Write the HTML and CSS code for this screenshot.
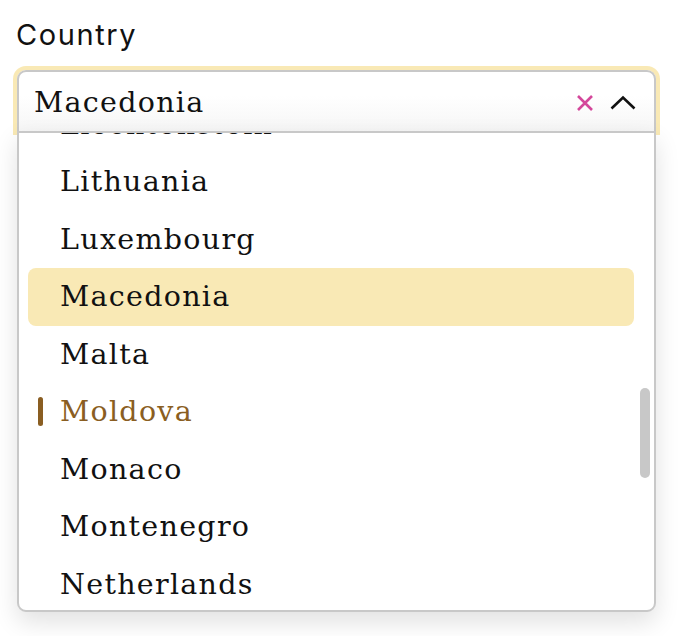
FILE: index.html
```html
<!DOCTYPE html>
<html>
<head>
<meta charset="utf-8">
<link rel="stylesheet" href="styles.css">
</head>
<body>
<div class="field">
  <div class="label">Country</div>
  <div class="select">
    <div class="control">
      <span class="value">Macedonia</span>
      <span class="icons">
        <svg class="clear" width="18" height="16" viewBox="0 0 18 16"><path d="M2 1 L16 15 M16 1 L2 15" stroke="#d4479b" stroke-width="2.6" fill="none"/></svg>
        <svg class="chev" width="26" height="16" viewBox="0 0 26 16"><path d="M1.5 13.5 L13 2.5 L24.5 13.5" stroke="#111" stroke-width="2.6" fill="none"/></svg>
      </span>
    </div>
    <div class="menu">
      <div class="list">
        <div class="opt">Liechtenstein</div>
        <div class="opt">Lithuania</div>
        <div class="opt">Luxembourg</div>
        <div class="opt selected">Macedonia</div>
        <div class="opt">Malta</div>
        <div class="opt focused">Moldova</div>
        <div class="opt">Monaco</div>
        <div class="opt">Montenegro</div>
        <div class="opt">Netherlands</div>
      </div>
      <div class="thumb"></div>
    </div>
  </div>
</div>
</body>
</html>
```
FILE: styles.css
```css
html, body { margin: 0; padding: 0; background: #fff; }
body { width: 680px; height: 636px; overflow: hidden; }
.field { padding: 16px 0 0 17px; width: 639px; }
.label {
  font-family: Inter, "Noto Sans", sans-serif;
  font-size: 29px;
  line-height: 38px;
  color: #111;
  margin-left: -1px;
  letter-spacing: 1.6px;
}
.select { position: relative; margin-top: 16px; }
.control {
  height: 61px;
  box-sizing: border-box;
  border: 2px solid #c8c8c8;
  border-bottom: none;
  border-radius: 9px 9px 0 0;
  background: linear-gradient(#fff 40%, #f6f6f6);
  box-shadow: 0 0 0 4px #f9e9b5;
  display: flex;
  align-items: center;
  justify-content: space-between;
  padding: 0 18px 0 15px;
}
.value, .opt {
  font-family: "DejaVu Serif", serif;
  font-size: 28.5px;
  letter-spacing: 1.3px;
  color: #111;
}
.value { margin-top: 2px; }
.icons { display: flex; align-items: center; gap: 16px; margin-top: 2px; }
.menu {
  position: absolute;
  left: 0; top: 61px;
  width: 639px;
  height: 481px;
  box-sizing: border-box;
  border: 2px solid #c8c8c8;
  border-radius: 0 0 9px 9px;
  background: #fff;
  box-shadow: 0 10px 24px rgba(0,0,0,0.12);
  overflow: hidden;
  z-index: 2;
}
.list { margin-top: -37.5px; padding: 0 20px 0 9px; }
.opt {
  height: 57.5px;
  line-height: 57.5px;
  padding-left: 32px;
  border-radius: 8px;
  position: relative;
  white-space: nowrap;
}
.opt.selected { background: #f9e9b5; }
.opt.focused { color: #8a5e22; }
.opt.focused::before {
  content: "";
  position: absolute;
  left: 10px; top: 14px;
  width: 5px; height: 29px;
  border-radius: 3px;
  background: #8a5e22;
}
.thumb {
  position: absolute;
  right: 4px; top: 255px;
  width: 10px; height: 90px;
  border-radius: 5px;
  background: #c8c8c8;
}
```
